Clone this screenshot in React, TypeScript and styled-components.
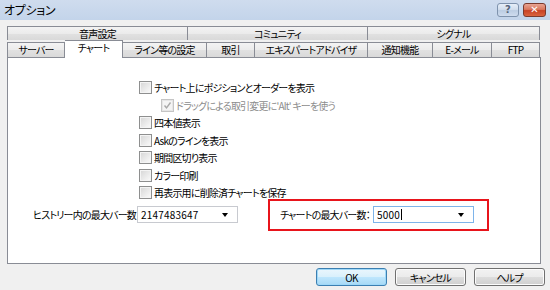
import React from 'react';
import styled, { createGlobalStyle } from 'styled-components';

const GlobalStyle = createGlobalStyle`
  html, body {
    margin: 0;
    padding: 0;
    width: 550px;
    height: 290px;
    overflow: hidden;
    background: #f0f0f0;
    font-family: "Noto Sans CJK JP", "Liberation Sans", sans-serif;
    font-size: 10px;
    font-feature-settings: "palt";
    letter-spacing: -0.8px;
    color: #000;
  }
`;

const Window = styled.div`
  width: 550px;
  height: 290px;
  display: flex;
  flex-direction: column;
  background: #f0f0f0;
`;

const TitleBar = styled.div`
  height: 20px;
  display: flex;
  align-items: center;
  padding: 0 4px;
  background: linear-gradient(#cfdcee, #c3d4ea);
`;

const TitleText = styled.div`
  flex: 1;
  font-size: 12px;
  letter-spacing: -0.3px;
  line-height: 20px;
  color: #000;
`;

const CaptionButton = styled.div<{ $close?: boolean }>`
  width: ${p => (p.$close ? 23 : 22)}px;
  height: 14px;
  margin-left: ${p => (p.$close ? 4 : 0)}px;
  border: 1px solid ${p => (p.$close ? '#7a3a2e' : '#7f93ad')};
  border-radius: 3px;
  box-sizing: border-box;
  background: ${p =>
    p.$close
      ? 'linear-gradient(#e8a493 0%, #d9785f 45%, #c84225 55%, #d9643f 100%)'
      : 'linear-gradient(#e6eef8 0%, #d2deed 45%, #bccde3 55%, #cfdcee 100%)'};
  display: flex;
  align-items: center;
  justify-content: center;
  color: ${p => (p.$close ? '#fff' : '#56647a')};
  font-family: "DejaVu Sans", sans-serif;
  font-weight: bold;
  font-size: 10px;
  letter-spacing: 0;
  line-height: 1;
`;

const Body = styled.div`
  flex: 1;
  display: flex;
  flex-direction: column;
  padding: 6px 9px 0 7px;
`;

const TabRow = styled.div<{ $top?: boolean }>`
  display: flex;
  align-items: flex-end;
  height: ${p => (p.$top ? 14 : 17)}px;
  position: relative;
  z-index: 1;
`;

const Tab = styled.div<{ $w: number; $active?: boolean; $top?: boolean; $first?: boolean }>`
  width: ${p => p.$w}px;
  height: ${p => (p.$active ? 18 : p.$top ? 14 : 15)}px;
  margin-bottom: ${p => (p.$active ? -1 : 0)}px;
  box-sizing: border-box;
  border: 1px solid #898c95;
  border-left-width: ${p => (p.$first ? 1 : 0)}px;
  border-bottom-width: 0;
  background: ${p =>
    p.$active ? '#fff' : 'linear-gradient(#f3f3f3 0%, #ebebeb 50%, #e1e1e1 51%, #d9d9d9 100%)'};
  display: flex;
  align-items: center;
  justify-content: center;
  font-size: 10px;
  line-height: 1;
  padding-bottom: ${p => (p.$active ? 3 : 0)}px;
  white-space: nowrap;
`;

const Panel = styled.div`
  height: 207px;
  background: #fff;
  border: 1px solid #898c95;
  box-sizing: border-box;
  display: flex;
  flex-direction: column;
  padding: 21px 0 0 0;
`;

const CheckList = styled.div`
  display: flex;
  flex-direction: column;
  padding-left: 131px;
`;

const CheckRow = styled.div<{ $indent?: boolean; $disabled?: boolean }>`
  height: 17.5px;
  display: flex;
  align-items: center;
  padding-left: ${p => (p.$indent ? 22 : 0)}px;
  color: ${p => (p.$disabled ? '#8d8d8d' : '#000')};
  font-size: 10px;
  white-space: nowrap;
`;

const Box = styled.div<{ $disabled?: boolean }>`
  width: 13px;
  height: 13px;
  box-sizing: border-box;
  border: 1px solid ${p => (p.$disabled ? '#c5c5c5' : '#8e8f8f')};
  background: ${p =>
    p.$disabled ? '#f4f4f4' : 'linear-gradient(135deg, #d5d5d5, #f0f0f0 70%, #fbfbfb)'};
  box-shadow: inset 0 0 0 1px ${p => (p.$disabled ? '#e6e6e6' : '#f4f4f4')};
  margin-right: 2px;
  display: flex;
  align-items: center;
  justify-content: center;
  flex-shrink: 0;
`;

const FieldRow = styled.div`
  display: flex;
  align-items: center;
  margin-top: -3px;
  padding-left: 25px;
`;

const Field = styled.div`
  display: flex;
  align-items: center;
`;

const Highlight = styled.div`
  display: flex;
  align-items: center;
  margin-left: 30px;
  width: 221px;
  height: 32px;
  box-sizing: border-box;
  border: 2px solid #e8141b;
  padding-left: 10px;
`;

const Label = styled.div<{ $w: number }>`
  width: ${p => p.$w}px;
  font-size: 10px;
  white-space: nowrap;
`;

const Combo = styled.div<{ $focus?: boolean }>`
  width: 101px;
  height: 17px;
  box-sizing: border-box;
  border: 1px solid ${p => (p.$focus ? '#7eb4ea' : '#c8cad0')};
  background: #fff;
  display: flex;
  align-items: center;
  padding: 0 9px 0 3px;
  font-size: 10px;
`;

const ComboValue = styled.div`
  flex: 1;
  display: flex;
  align-items: center;
  letter-spacing: 0.2px;
`;

const Caret = styled.span`
  display: inline-block;
  width: 1px;
  height: 11px;
  background: #000;
  margin-left: 1px;
`;

const Arrow = styled.div`
  width: 0;
  height: 0;
  border-left: 3.5px solid transparent;
  border-right: 3.5px solid transparent;
  border-top: 4px solid #000;
`;

const ButtonRow = styled.div`
  display: flex;
  justify-content: flex-end;
  gap: 8px;
  padding: 4px 5px 0 0;
  margin-right: -9px;
`;

const Button = styled.div<{ $default?: boolean }>`
  width: 71px;
  height: 18px;
  box-sizing: border-box;
  border: 1px solid ${p => (p.$default ? '#3c7fb1' : '#707070')};
  border-radius: 3px;
  background: ${p =>
    p.$default
      ? 'linear-gradient(#eaf6fd 0%, #d9f0fc 50%, #bee6fd 51%, #a7d9f5 100%)'
      : 'linear-gradient(#f2f2f2 0%, #ebebeb 50%, #dddddd 51%, #cfcfcf 100%)'};
  box-shadow: inset 0 0 0 1px ${p => (p.$default ? '#9fd8f8' : '#fcfcfc')};
  display: flex;
  align-items: center;
  justify-content: center;
  font-size: 10px;
`;

const CheckMark = () => (
  <svg width="9" height="9" viewBox="0 0 9 9">
    <path d="M1.5 4.5 L3.5 6.8 L7.5 1.5" fill="none" stroke="#a8a8a8" strokeWidth="1.4" />
  </svg>
);

const topTabs = [
  { label: '音声設定', w: 181 },
  { label: 'コミュニティ', w: 180 },
  { label: 'シグナル', w: 172 },
];

const tabs = [
  { label: 'サーバー', w: 58 },
  { label: 'チャート', w: 58, active: true },
  { label: 'ライン等の設定', w: 84 },
  { label: '取引', w: 48 },
  { label: 'エキスパートアドバイザ', w: 113 },
  { label: '通知機能', w: 65 },
  { label: 'E-メール', w: 59 },
  { label: 'FTP', w: 48 },
];

const checks = [
  { label: 'チャート上にポジションとオーダーを表示' },
  { label: "ドラッグによる取引変更に'Alt' キーを使う", indent: true, disabled: true, checked: true },
  { label: '四本値表示' },
  { label: 'Askのラインを表示' },
  { label: '期間区切り表示' },
  { label: 'カラー印刷' },
  { label: '再表示用に削除済チャートを保存' },
];

export default function App() {
  return (
    <Window>
      <GlobalStyle />
      <TitleBar>
        <TitleText>オプション</TitleText>
        <CaptionButton>?</CaptionButton>
        <CaptionButton $close>✕</CaptionButton>
      </TitleBar>
      <Body>
        <TabRow $top>
          {topTabs.map((t, i) => (
            <Tab key={t.label} $w={t.w} $top $first={i === 0}>
              {t.label}
            </Tab>
          ))}
        </TabRow>
        <TabRow>
          {tabs.map((t, i) => (
            <Tab key={t.label} $w={t.w} $active={t.active} $first={i === 0}>
              {t.label}
            </Tab>
          ))}
        </TabRow>
        <Panel>
          <CheckList>
            {checks.map(c => (
              <CheckRow key={c.label} $indent={c.indent} $disabled={c.disabled}>
                <Box $disabled={c.disabled}>{c.checked && <CheckMark />}</Box>
                {c.label}
              </CheckRow>
            ))}
          </CheckList>
          <FieldRow>
            <Field>
              <Label $w={104}>ヒストリー内の最大バー数</Label>
              <Combo>
                <ComboValue>2147483647</ComboValue>
                <Arrow />
              </Combo>
            </Field>
            <Highlight>
              <Label $w={93}>チャートの最大バー数：</Label>
              <Combo $focus>
                <ComboValue>
                  5000
                  <Caret />
                </ComboValue>
                <Arrow />
              </Combo>
            </Highlight>
          </FieldRow>
        </Panel>
        <ButtonRow>
          <Button $default>OK</Button>
          <Button>キャンセル</Button>
          <Button>ヘルプ</Button>
        </ButtonRow>
      </Body>
    </Window>
  );
}
